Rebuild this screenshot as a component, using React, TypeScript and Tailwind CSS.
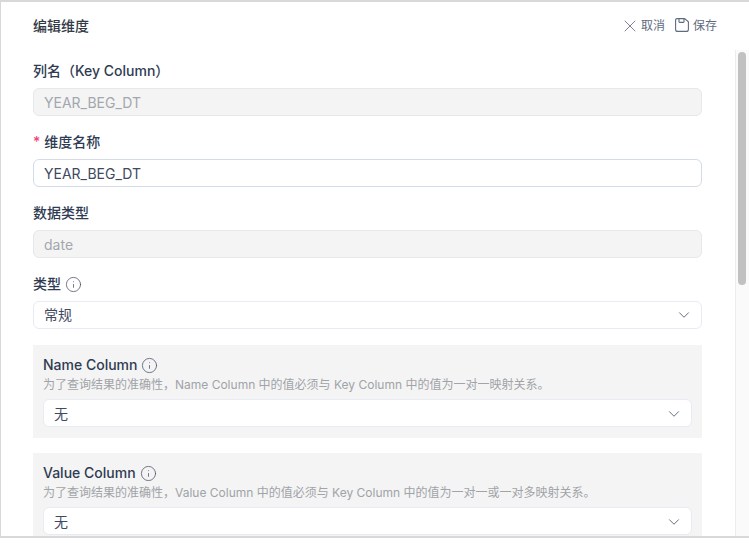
import { ChevronDown, Info, X } from 'lucide-react';

const font = "font-['Inter','Noto_Sans_CJK_SC',sans-serif]";

function SaveIcon() {
  return (
    <svg width="14" height="14" viewBox="0 0 14 14" fill="none" stroke="#5f6b7f" strokeWidth="1.1">
      <path d="M2 .6h7.600L13.400 3.800V11.400a2 2 0 0 1-2 2H2.600a2 2 0 0 1-2-2V2a1.400 1.400 0 0 1 1.400-1.400z" />
      <path d="M4 .6v3.200a.6.6 0 0 0 .6.6h3.800a.6.6 0 0 0 .6-.6V.6" />
    </svg>
  );
}

function Label({ children, required, info }: { children: string; required?: boolean; info?: boolean }) {
  return (
    <div className="flex h-[22px] items-center text-sm font-medium leading-[22px] text-[#2f3b52]">
      {required && <span className="mr-[4px] text-[#f5417b]">*</span>}
      <span>{children}</span>
      {info && <Info className="ml-[4px] text-[#4a5568]" size={17} strokeWidth={1.1} />}
    </div>
  );
}

function Field({ value, disabled }: { value: string; disabled?: boolean }) {
  return (
    <div
      className={`mt-[6px] flex h-7 items-center rounded-md border px-[10px] pt-px text-sm ${
        disabled
          ? 'border-[#e6e8ec] bg-[#f4f4f4] text-[#a3a7ad]'
          : 'border-[#d3dbe8] bg-white text-[#3f4a5f]'
      }`}
    >
      {value}
    </div>
  );
}

function Select({ value, className }: { value: string; className?: string }) {
  return (
    <div
      className={`flex h-7 items-center justify-between rounded-md border border-[#e8ebf3] bg-white pl-[10px] pr-[8px] text-sm text-[#3f4a5f] ${className ?? ''}`}
    >
      <span>{value}</span>
      <ChevronDown className="text-[#5f6b7f]" size={18} strokeWidth={1.3} />
    </div>
  );
}

function ColumnBox({ title, hint }: { title: string; hint: string }) {
  return (
    <div className="mb-[15px] bg-[#f4f4f4] px-[10px] pb-[11px] pt-[9px]">
      <Label info>{title}</Label>
      <p className="text-xs leading-[17px] text-[#a0a3a8]">{hint}</p>
      <Select value="无" className="mt-[6px] pt-px" />
    </div>
  );
}

export default function App() {
  return (
    <div className={`${font} h-[543px] w-[749px] overflow-hidden bg-white`}>
      <div className="flex h-[538px] flex-col overflow-hidden border-b-2 border-l border-t-2 border-[#d8d8d8]">
        <header className="flex h-12 shrink-0 items-center justify-between pl-8 pr-[32px]">
          <h1 className="text-sm font-medium text-[#333a45]">编辑维度</h1>
          <div className="flex items-center text-xs text-[#5f6b7f]">
            <X size={20} strokeWidth={1} />
            <span className="ml-px">取消</span>
            <span className="ml-[10px] -translate-y-px">
              <SaveIcon />
            </span>
            <span className="ml-[4px]">保存</span>
          </div>
        </header>
        <div className="flex min-h-0 flex-1">
          <main className="min-w-0 flex-1 overflow-hidden pl-8 pr-[33px] pt-[10px]">
            <Label>列名（Key Column）</Label>
            <Field value="YEAR_BEG_DT" disabled />
            <div className="mt-[15px]">
              <Label required>维度名称</Label>
              <Field value="YEAR_BEG_DT" />
            </div>
            <div className="mt-[15px]">
              <Label>数据类型</Label>
              <Field value="date" disabled />
            </div>
            <div className="mt-[15px]">
              <Label info>类型</Label>
              <Select value="常规" className="mt-[6px]" />
            </div>
            <div className="mt-4">
              <ColumnBox
                title="Name Column"
                hint="为了查询结果的准确性，Name Column 中的值必须与 Key Column 中的值为一对一映射关系。"
              />
              <ColumnBox
                title="Value Column"
                hint="为了查询结果的准确性，Value Column 中的值必须与 Key Column 中的值为一对一或一对多映射关系。"
              />
            </div>
          </main>
          <div className="w-[14px] shrink-0 border-l border-[#ececec] bg-[#fafafa] px-[2px] pt-[2px]">
            <div className="h-[233px] w-2 rounded bg-[#c1c1c1]" />
          </div>
        </div>
      </div>
    </div>
  );
}
